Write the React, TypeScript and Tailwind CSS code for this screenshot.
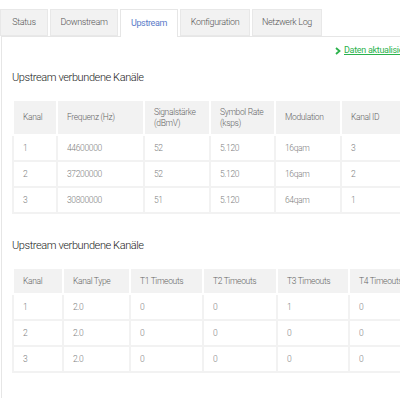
import React from "react";

const tabs = [
  { t: "Status", w: "w-[48px]" },
  { t: "Downstream", w: "w-[68px]" },
  { t: "Upstream", w: "w-[58px]" },
  { t: "Konfiguration", w: "w-[70px]" },
  { t: "Netzwerk Log", w: "w-[70px]" },
];

type Col = { label: React.ReactNode; w: string };

const upCols: Col[] = [
  { label: "Kanal", w: "w-[44px]" },
  { label: "Frequenz (Hz)", w: "w-[87px]" },
  { label: <>Signalstärke<br />(dBmV)</>, w: "w-[66px]" },
  { label: <>Symbol Rate<br />(ksps)</>, w: "w-[65px]" },
  { label: "Modulation", w: "w-[66px]" },
  { label: "Kanal ID", w: "w-[70px]" },
];

const upRows = [
  ["1", "44600000", "52", "5.120", "16qam", "3"],
  ["2", "37200000", "52", "5.120", "16qam", "2"],
  ["3", "30800000", "51", "5.120", "64qam", "1"],
];

const toCols: Col[] = [
  { label: "Kanal", w: "w-[50px]" },
  { label: "Kanal Type", w: "w-[67px]" },
  { label: "T1 Timeouts", w: "w-[73px]" },
  { label: "T2 Timeouts", w: "w-[74px]" },
  { label: "T3 Timeouts", w: "w-[72px]" },
  { label: "T4 Timeouts", w: "w-[70px]" },
];

const toRows = [
  ["1", "2.0", "0", "0", "1", "0"],
  ["2", "2.0", "0", "0", "0", "0"],
  ["3", "2.0", "0", "0", "0", "0"],
];

function DataTable({
  cols,
  rows,
  headH,
  width,
}: {
  cols: Col[];
  rows: string[][];
  headH: string;
  width: string;
}) {
  return (
    <table className={`${width} border-collapse table-fixed text-[8.5px] tracking-[-0.35px] font-light text-[#808080] border border-[#ececec]`}>
      <thead>
        <tr className={`bg-[#f2f2f2] ${headH}`}>
          {cols.map((c, i) => (
            <th
              key={i}
              className={`${c.w} border-2 border-white px-[9px] text-left font-light leading-[11px] text-[#666] whitespace-nowrap`}
            >
              {c.label}
            </th>
          ))}
        </tr>
      </thead>
      <tbody>
        {rows.map((r, ri) => (
          <tr key={ri} className="h-[26px]">
            {r.map((v, ci) => (
              <td key={ci} className="border-2 border-[#f2f2f2] px-[9px] text-left">
                {v}
              </td>
            ))}
          </tr>
        ))}
      </tbody>
    </table>
  );
}

export default function App() {
  return (
    <div className="w-[400px] h-[398px] overflow-hidden bg-white font-['Roboto',sans-serif]">
      <div className="w-[440px]">
        {/* Tabs */}
        <div className="flex gap-[2px] pt-[8px] h-[36px] items-end">
          {tabs.map(({ t, w }) => {
            const active = t === "Upstream";
            return (
              <div
                key={t}
                className={
                  active
                    ? `${w} h-[28px] flex items-center justify-center bg-white border border-b-0 border-[#e6e6e6] text-[9px] tracking-[-0.35px] text-[#5b7bc9] relative top-[1px]`
                    : `${w} h-[27px] flex items-center justify-center bg-[#f2f2f2] border border-[#e8e8e8] text-[9px] tracking-[-0.35px] text-[#555] font-light`
                }
              >
                {t}
              </div>
            );
          })}
        </div>

        {/* Panel */}
        <div className="ml-[1px] border-l border-t border-[#e6e6e6] h-[370px] pl-[10px]">
          <div className="flex items-center gap-[3px] h-[26px] pt-[2px] ml-[323px] text-[9px] tracking-[-0.3px] text-[#2bb24c]">
            <svg width="6" height="8" viewBox="0 0 6 8">
              <path d="M1 1 L4.5 4 L1 7" fill="none" stroke="#2bb24c" strokeWidth="1.8" />
            </svg>
            <span className="underline">Daten aktualisieren</span>
          </div>
          <h2 className="text-[11px] tracking-[-0.4px] font-light text-[#222] mt-[7px] mb-[13px] leading-[16px]">
            Upstream verbundene Kanäle
          </h2>
          <DataTable cols={upCols} rows={upRows} headH="h-[35px]" width="w-[398px]" />
          <h2 className="text-[11px] tracking-[-0.4px] font-light text-[#222] mt-[24px] mb-[13px] leading-[16px]">
            Upstream verbundene Kanäle
          </h2>
          <DataTable cols={toCols} rows={toRows} headH="h-[26px]" width="w-[406px]" />
        </div>
      </div>
    </div>
  );
}
